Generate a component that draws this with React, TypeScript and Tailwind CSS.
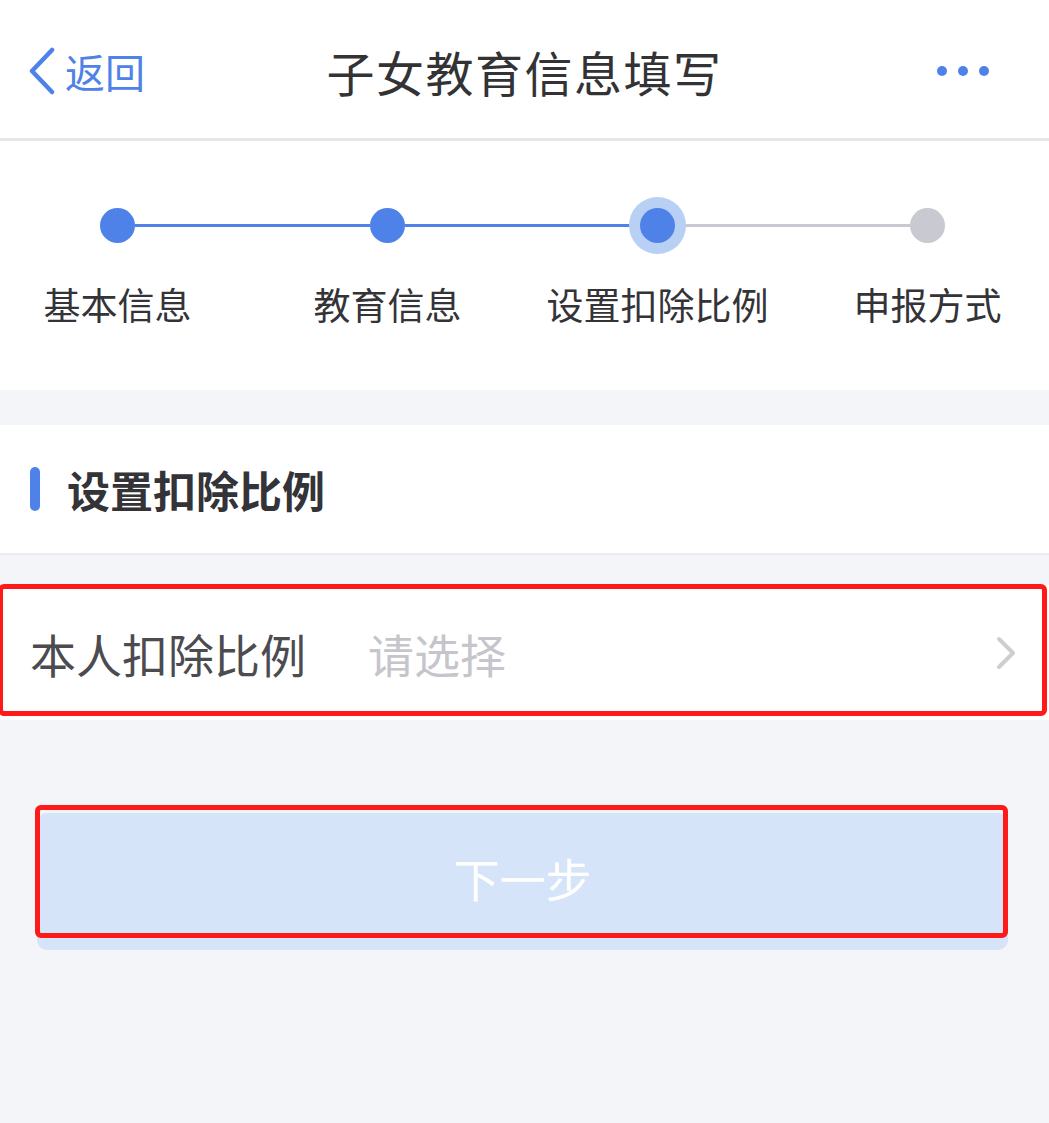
import React from 'react';

const steps = [
  { label: '基本信息', state: 'done' },
  { label: '教育信息', state: 'done' },
  { label: '设置扣除比例', state: 'active' },
  { label: '申报方式', state: 'todo' },
];

const font = { fontFamily: '"Noto Sans CJK SC", "Noto Sans", sans-serif' };

const App: React.FC = () => {
  return (
    <div className="min-h-[1123px] w-full bg-[#f3f5f9]" style={font}>
      {/* nav bar */}
      <div className="grid h-[141px] grid-cols-[1fr_auto_1fr] items-center border-b-[3px] border-[#e6e6e9] bg-white pt-[4px]">
        <div className="flex items-center pl-[27px]">
          <svg width="30" height="48" viewBox="0 0 30 48" fill="none">
            <path d="M25 3 L5 24 L25 45" stroke="#4f82e8" strokeWidth="4.5" strokeLinecap="round" strokeLinejoin="round" />
          </svg>
          <span className="ml-[8px] text-[40px] leading-none text-[#4f82e8]">返回</span>
        </div>
        <div className="text-[48px] leading-none tracking-[1.5px] text-[#333336]">子女教育信息填写</div>
        <div className="flex items-center justify-end gap-[11px] pr-[60px]">
          <span className="h-[10px] w-[10px] rounded-full bg-[#4f82e8]" />
          <span className="h-[10px] w-[10px] rounded-full bg-[#4f82e8]" />
          <span className="h-[10px] w-[10px] rounded-full bg-[#4f82e8]" />
        </div>
      </div>

      {/* steps */}
      <div className="h-[249px] bg-white pl-[100px] pr-[104px] pt-[67px]">
        <div className="flex items-start">
          {steps.map((s, i) => (
            <React.Fragment key={s.label}>
              {i > 0 && (
                <div
                  className={`mt-[16px] h-[3px] flex-1 ${s.state === 'todo' ? 'bg-[#c9c9d1]' : 'bg-[#4f82e8]'}`}
                />
              )}
              <div className="relative z-10 flex w-[35px] flex-col items-center">
                <div
                  className={
                    s.state === 'active'
                      ? 'h-[35px] w-[35px] rounded-full bg-[#4f82e8] shadow-[0_0_0_11px_#b9d0f5]'
                      : s.state === 'done'
                        ? 'h-[35px] w-[35px] rounded-full bg-[#4f82e8]'
                        : 'h-[35px] w-[35px] rounded-full bg-[#c9c9d1]'
                  }
                />
                <div className="mt-[43px] whitespace-nowrap text-[37px] leading-none text-[#333338]">{s.label}</div>
              </div>
            </React.Fragment>
          ))}
        </div>
      </div>

      {/* section title */}
      <div className="mt-[35px] flex h-[130px] items-center border-b-[2px] border-[#ececf0] bg-white pl-[30px]">
        <span className="h-[44px] w-[10px] rounded-full bg-[#4f82e8]" />
        <span className="ml-[27px] text-[43px] font-bold leading-none text-[#333338]">设置扣除比例</span>
      </div>

      {/* row */}
      <div className="relative mt-[30px] flex h-[135px] items-center bg-white pl-[30px] pr-[32px]">
        <span className="text-[46px] leading-none text-[#4b4b50]">本人扣除比例</span>
        <span className="ml-[62px] flex-1 text-[46px] leading-none text-[#c5c5cb]">请选择</span>
        <svg width="22" height="34" viewBox="0 0 22 34" fill="none">
          <path d="M4 3 L18 17 L4 31" stroke="#cdcdd2" strokeWidth="4" strokeLinecap="round" strokeLinejoin="round" />
        </svg>
        <div className="pointer-events-none absolute -left-[2px] right-[2px] -top-[1px] bottom-[4px] rounded-[6px] border-[5px] border-[#ff1a1a]" />
      </div>

      {/* button */}
      <div className="relative ml-[37px] mr-[41px] mt-[93px] flex h-[137px] items-center justify-center rounded-[10px] bg-[#d5e4f8] pb-[10px]">
        <span className="text-[46px] leading-none text-white">下一步</span>
        <div className="pointer-events-none absolute -left-[2px] right-0 -top-[8px] bottom-[12px] rounded-[6px] border-[5px] border-[#ff1a1a]" />
      </div>
    </div>
  );
};

export default App;
